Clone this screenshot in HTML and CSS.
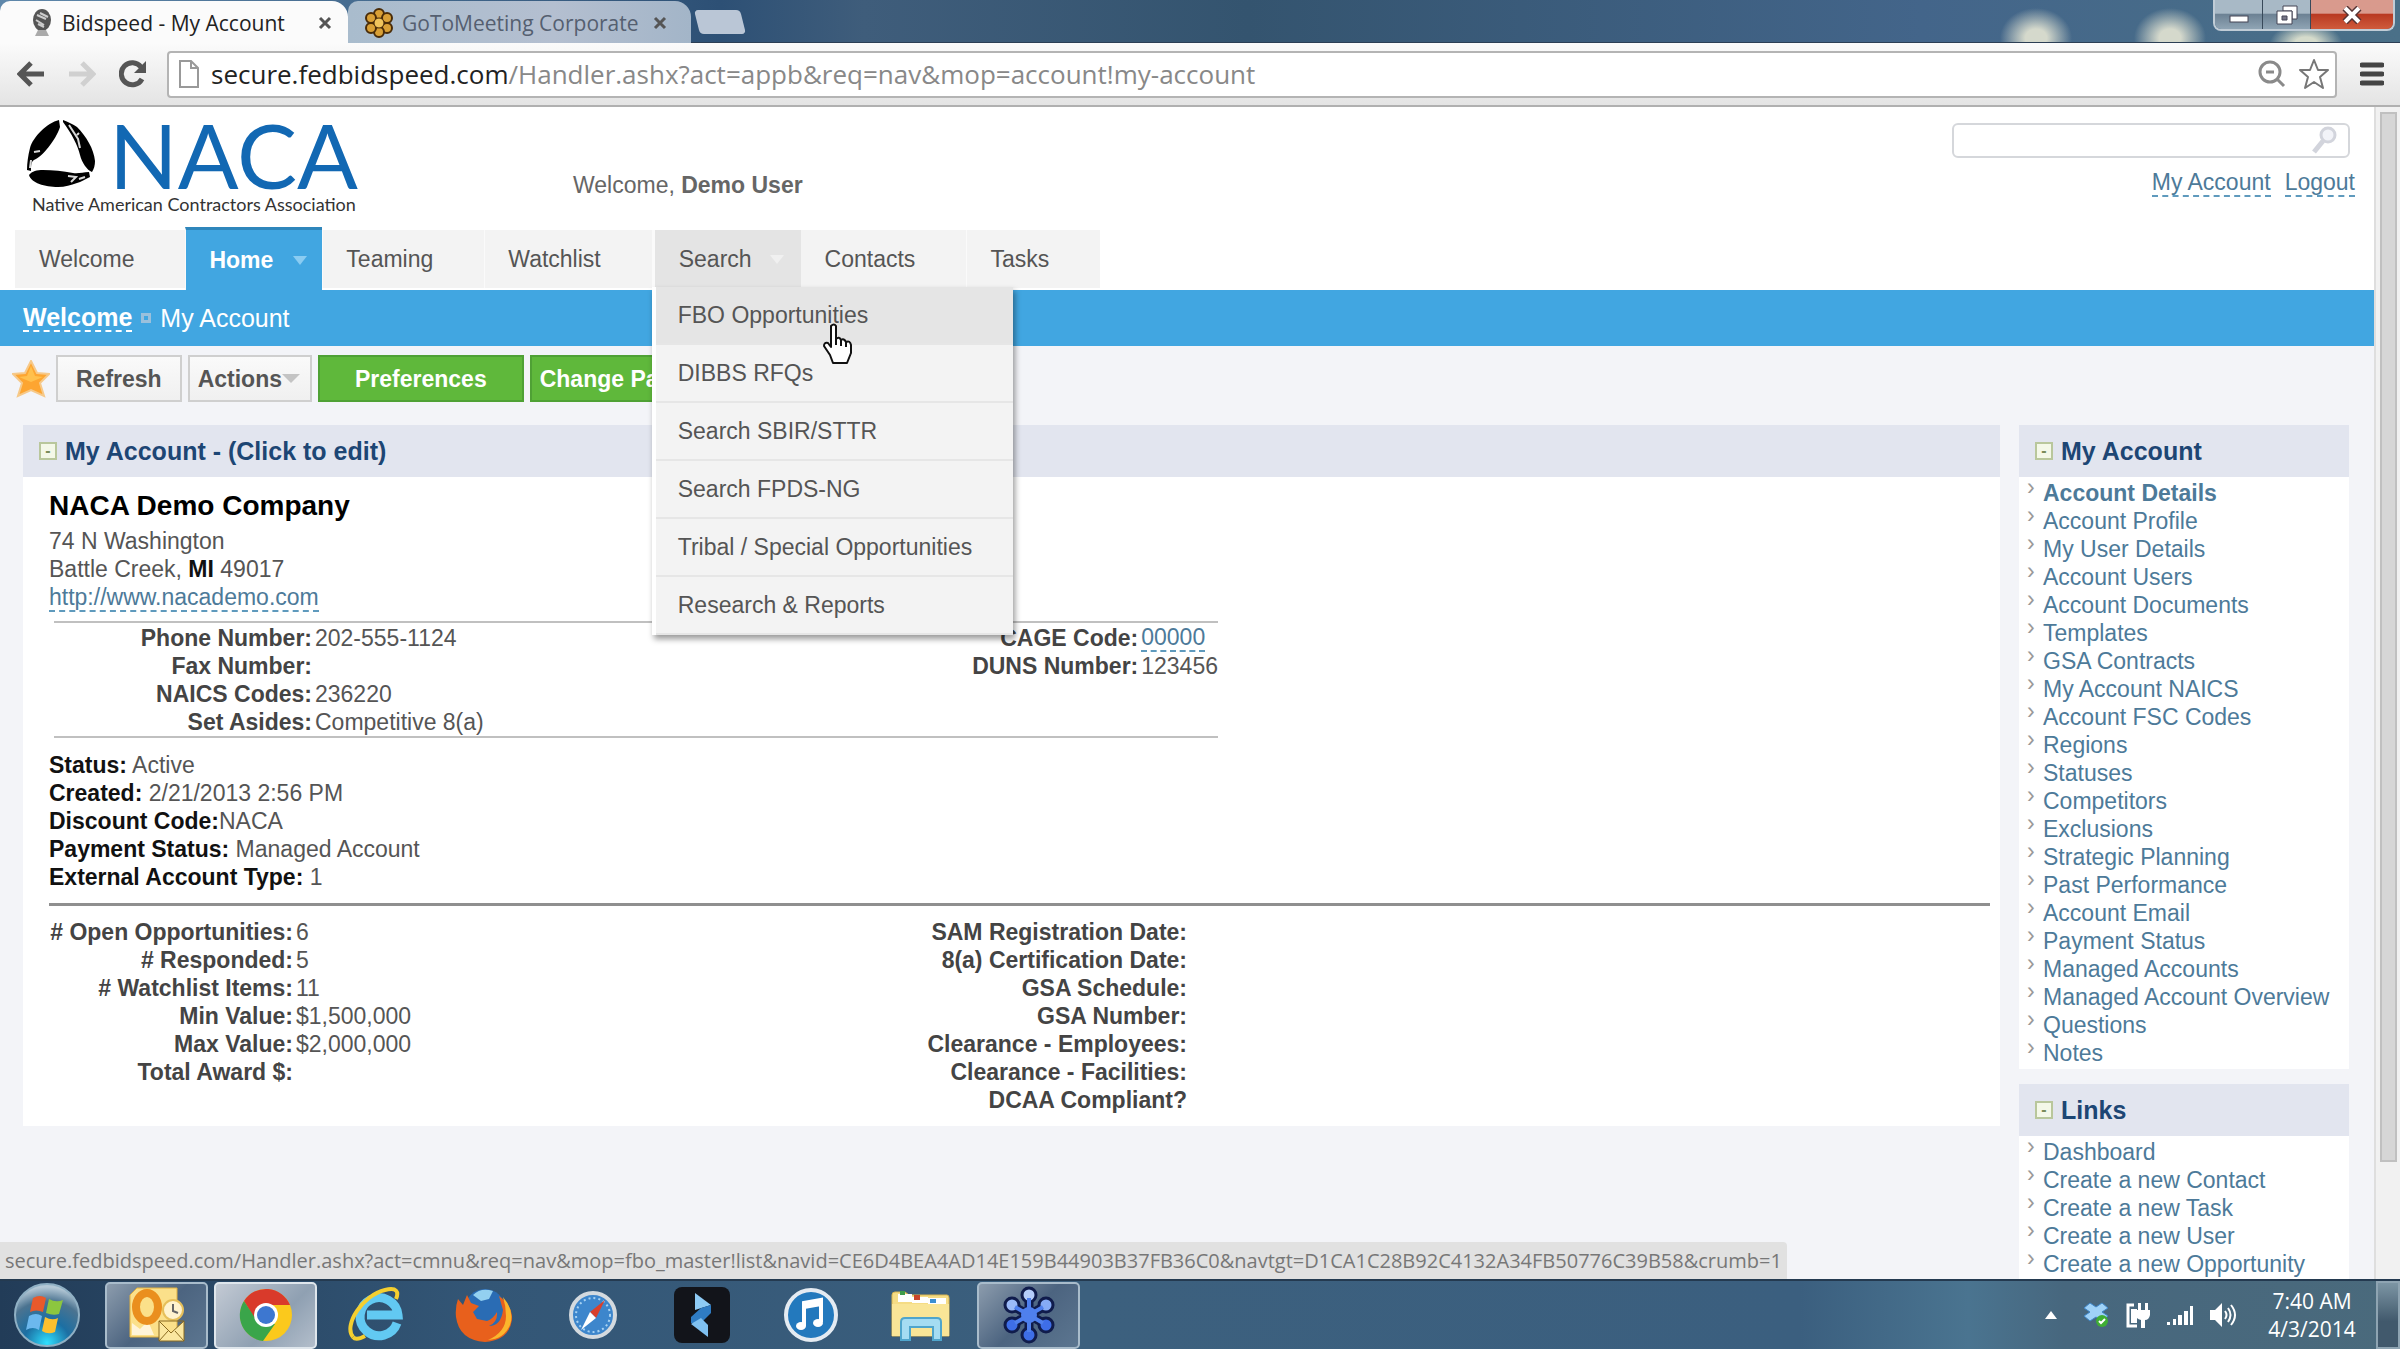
FILE: index.html
```html
<!DOCTYPE html>
<html lang="en">
<head>
    <meta charset="UTF-8">
    <meta name="viewport" content="width=device-width, initial-scale=1.0">
    <title>Bidspeed - My Account</title>
    <link rel="stylesheet" href="styles.css">
</head>
<body>
    <!-- browser tabs -->
    <div class="tabstrip">
        <div class="tab active">
            <svg class="favicon" width="24" height="28" viewBox="0 0 24 28"><ellipse cx="12" cy="11" rx="9" ry="11" fill="#555"/><path d="M7 6l9 4M6 11l8 5M10 4l8 4M8 15l6 3" stroke="#ccc" stroke-width="2"/><path d="M8 21h8l3 6H5z" fill="#aaa"/></svg>
            <span class="tab-title">Bidspeed - My Account</span>
            <button class="tab-close" aria-label="Close tab"><svg width="14" height="14" viewBox="0 0 14 14"><path d="M2 2l10 10M12 2L2 12" stroke="#555" stroke-width="3"/></svg></button>
        </div>
        <div class="tab">
            <svg class="favicon" width="30" height="30" viewBox="0 0 30 30"><g fill="#d9a036" stroke="#4a2c08" stroke-width="2"><circle cx="15" cy="6" r="5"/><circle cx="23" cy="10" r="5"/><circle cx="23" cy="20" r="5"/><circle cx="15" cy="24" r="5"/><circle cx="7" cy="20" r="5"/><circle cx="7" cy="10" r="5"/></g><circle cx="15" cy="15" r="5" fill="#f0c45c" stroke="#4a2c08"/></svg>
            <span class="tab-title">GoToMeeting Corporate</span>
            <button class="tab-close" aria-label="Close tab"><svg width="14" height="14" viewBox="0 0 14 14"><path d="M2 2l10 10M12 2L2 12" stroke="#555" stroke-width="3"/></svg></button>
        </div>
        <button class="new-tab" aria-label="New tab"></button>
        <div class="window-controls">
            <button aria-label="Minimize"><svg width="20" height="18" viewBox="0 0 20 18"><rect x="1" y="10" width="18" height="6" fill="#fff" stroke="#445" stroke-width="1"/></svg></button>
            <button aria-label="Restore"><svg width="22" height="20" viewBox="0 0 22 20"><path d="M7 1h14v13h-5V6H7z" fill="#fff" stroke="#445"/><path d="M1 6h15v13H1z" fill="#fff" stroke="#445"/><path d="M6 11h5v4H6z" fill="#778" stroke="#445"/></svg></button>
            <button class="close" aria-label="Close"><svg width="20" height="18" viewBox="0 0 20 18"><path d="M3 2l14 14M17 2L3 16" stroke="#533" stroke-width="7"/><path d="M3 2l14 14M17 2L3 16" stroke="#fff" stroke-width="4"/></svg></button>
        </div>
    </div>

    <div class="toolbar">
        <button aria-label="Back"><svg width="28" height="26" viewBox="0 0 28 26"><path d="M27 13H5M14 2L3 13l11 11" fill="none" stroke="#555" stroke-width="5"/></svg></button>
        <button aria-label="Forward"><svg width="28" height="26" viewBox="0 0 28 26"><path d="M1 13h22M14 2l11 11-11 11" fill="none" stroke="#d0d0d0" stroke-width="5"/></svg></button>
        <button aria-label="Reload"><svg width="28" height="28" viewBox="0 0 28 28"><path d="M23 19A11 11 0 1 1 22 7" fill="none" stroke="#555" stroke-width="5"/><path d="M27 1v12H15z" fill="#555"/></svg></button>
        <div class="omnibox">
            <svg width="20" height="28" viewBox="0 0 20 28"><path d="M1 1h11l7 7v19H1zM12 1v7h7" fill="#fff" stroke="#999" stroke-width="2"/></svg>
            <span class="url"><b>secure.fedbidspeed.com</b>/Handler.ashx?act=appb&amp;req=nav&amp;mop=account!my-account</span>
            <button aria-label="Zoom"><svg width="28" height="28" viewBox="0 0 28 28"><circle cx="12" cy="12" r="10" fill="none" stroke="#8a8a8a" stroke-width="3"/><path d="M8 12h8M19 19l7 7" stroke="#8a8a8a" stroke-width="3"/></svg></button>
            <button aria-label="Bookmark"><svg width="32" height="32" viewBox="0 0 32 32"><path d="M16 2l4 10h10l-8 7 3 11-9-6-9 6 3-11-8-7h10z" fill="#fff" stroke="#777" stroke-width="2" stroke-linejoin="round"/></svg></button>
        </div>
        <button class="menu-button" aria-label="Menu"><svg width="24" height="24" viewBox="0 0 24 24"><path d="M2 3h20M2 12h20M2 21h20" stroke="#444" stroke-width="5" stroke-linecap="round"/></svg></button>
    </div>

    <div class="viewport">
        <div class="page">
            <header class="header">
                <div class="logo">
                    <!-- three feathers arranged as a triangle -->
                    <svg class="emblem" width="72" height="70" viewBox="0 0 72 70">
                        <path d="M33 1C21 4 7 18 4 29c-2 8-3 15-3 22l4 1c0-5 0-9 3-11 8-3 22-20 26-33z"/>
                        <path d="M37 1c5 2 10 4 14 7 9 9 17 22 18 34 0 4-1 8-3 11-5-2-10-9-12-17-2-9-8-21-17-33z"/>
                        <path d="M3 56c3-4 8-5 14-5 10 0 20 1 30 3 5 1 10-1 16-1l1 5c-5 2-9 5-13 6-6 2-12 4-19 4C19 68 5 64 3 56z"/>
                        <path d="M5 41l-1 8M8 33l6-1M43 6l9 14 2 9M51 16l2-2M42 57l8 1-5 5M53 60l6-2" fill="none" stroke="#d8d8d8" stroke-width="2"/>
                    </svg>
                    <span class="logo-name">NACA</span>
                    <span class="logo-tag">Native American Contractors Association</span>
                </div>
                <p class="greeting">Welcome, <b>Demo User</b></p>
                <div class="user-tools">
                    <label class="search-box">
                        <input type="text" aria-label="Search">
                        <svg width="26" height="30" viewBox="0 0 26 30"><circle cx="16" cy="10" r="7" fill="#f2f3f8" stroke="#d2d4dc" stroke-width="3"/><path d="M11 16L2 27" stroke="#d2d4dc" stroke-width="5"/></svg>
                    </label>
                    <div class="user-links">
                        <a href="#">My Account</a>
                        <a href="#">Logout</a>
                    </div>
                </div>
            </header>

            <nav class="nav">
                <a href="#">Welcome</a>
                <a href="#" class="current">Home <span class="caret"></span></a>
                <a href="#">Teaming</a>
                <a href="#">Watchlist</a>
                <div class="nav-item">
                    <a href="#" class="open">Search <span class="caret"></span></a>
                    <div class="dropdown">
                        <a href="#" class="hovered">FBO Opportunities</a>
                        <a href="#">DIBBS RFQs</a>
                        <a href="#">Search SBIR/STTR</a>
                        <a href="#">Search FPDS-NG</a>
                        <a href="#">Tribal / Special Opportunities</a>
                        <a href="#">Research &amp; Reports</a>
                        <svg class="cursor" width="32" height="42" viewBox="0 0 32 42"><path d="M9 3q3-3 5 0v13q3-3 5 1 3-2 5 2 4-2 5 3v8l-4 10H11L8 32 2 23q0-4 4-3l3 4z" fill="#fff" stroke="#111" stroke-width="2" stroke-linejoin="round"/><path d="M14 15v7M19 17v6M24 19v5" stroke="#111" stroke-width="2"/></svg>
                    </div>
                </div>
                <a href="#">Contacts</a>
                <a href="#">Tasks</a>
            </nav>

            <div class="breadcrumb">
                <a href="#">Welcome</a>
                <span class="crumb-sep"></span>
                <span>My Account</span>
            </div>

            <div class="body">
                <div class="actions">
                    <svg width="38" height="38" viewBox="0 0 38 38"><path d="M19 1l6 12 12 1-9 9 4 13-13-6-13 6 4-13-9-9 12-1z" fill="#fda531" stroke="#f6c98a" stroke-width="2"/><path d="M19 6l4 10 8 1-12 5-12-5 8-1z" fill="#ffc04d"/></svg>
                    <button class="btn">Refresh</button>
                    <button class="btn menu">Actions<span class="caret"></span></button>
                    <button class="btn green wide">Preferences</button>
                    <button class="btn green">Change Password</button>
                </div>

                <div class="columns">
                    <main class="panel">
                        <h2><button class="toggle" aria-label="Collapse">-</button>My Account - (Click to edit)</h2>
                        <div class="account">
                            <h1>NACA Demo Company</h1>
                            <p>74 N Washington</p>
                            <p>Battle Creek, <b>MI</b> 49017</p>
                            <p><a href="#" class="dashed">http://www.nacademo.com</a></p>

                            <table class="contact">
                                <tr><th>Phone Number:</th><td>202-555-1124</td><th>CAGE Code:</th><td><a href="#" class="dashed">00000</a></td></tr>
                                <tr><th>Fax Number:</th><td></td><th>DUNS Number:</th><td>123456</td></tr>
                                <tr><th>NAICS Codes:</th><td>236220</td><th></th><td></td></tr>
                                <tr><th>Set Asides:</th><td>Competitive 8(a)</td><th></th><td></td></tr>
                            </table>

                            <p><b>Status:</b> Active</p>
                            <p><b>Created:</b> 2/21/2013 2:56 PM</p>
                            <p><b>Discount Code:</b>NACA</p>
                            <p><b>Payment Status:</b> Managed Account</p>
                            <p><b>External Account Type:</b> 1</p>
                            <hr>

                            <table class="stats">
                                <tr><th># Open Opportunities:</th><td>6</td><th>SAM Registration Date:</th></tr>
                                <tr><th># Responded:</th><td>5</td><th>8(a) Certification Date:</th></tr>
                                <tr><th># Watchlist Items:</th><td>11</td><th>GSA Schedule:</th></tr>
                                <tr><th>Min Value:</th><td>$1,500,000</td><th>GSA Number:</th></tr>
                                <tr><th>Max Value:</th><td>$2,000,000</td><th>Clearance - Employees:</th></tr>
                                <tr><th>Total Award $:</th><td></td><th>Clearance - Facilities:</th></tr>
                                <tr><th></th><td></td><th>DCAA Compliant?</th></tr>
                            </table>
                        </div>
                    </main>

                    <aside class="sidebar">
                        <section class="panel">
                            <h2><button class="toggle" aria-label="Collapse">-</button>My Account</h2>
                            <ul>
                                <li><a href="#"><b>Account Details</b></a></li>
                                <li><a href="#">Account Profile</a></li>
                                <li><a href="#">My User Details</a></li>
                                <li><a href="#">Account Users</a></li>
                                <li><a href="#">Account Documents</a></li>
                                <li><a href="#">Templates</a></li>
                                <li><a href="#">GSA Contracts</a></li>
                                <li><a href="#">My Account NAICS</a></li>
                                <li><a href="#">Account FSC Codes</a></li>
                                <li><a href="#">Regions</a></li>
                                <li><a href="#">Statuses</a></li>
                                <li><a href="#">Competitors</a></li>
                                <li><a href="#">Exclusions</a></li>
                                <li><a href="#">Strategic Planning</a></li>
                                <li><a href="#">Past Performance</a></li>
                                <li><a href="#">Account Email</a></li>
                                <li><a href="#">Payment Status</a></li>
                                <li><a href="#">Managed Accounts</a></li>
                                <li><a href="#">Managed Account Overview</a></li>
                                <li><a href="#">Questions</a></li>
                                <li><a href="#">Notes</a></li>
                            </ul>
                        </section>
                        <section class="panel">
                            <h2><button class="toggle" aria-label="Collapse">-</button>Links</h2>
                            <ul>
                                <li><a href="#">Dashboard</a></li>
                                <li><a href="#">Create a new Contact</a></li>
                                <li><a href="#">Create a new Task</a></li>
                                <li><a href="#">Create a new User</a></li>
                                <li><a href="#">Create a new Opportunity</a></li>
                            </ul>
                        </section>
                    </aside>
                </div>
            </div>
        </div>
        <div class="scrollbar"><div class="thumb"></div></div>
        <div class="status">secure.fedbidspeed.com/Handler.ashx?act=cmnu&amp;req=nav&amp;mop=fbo_master!list&amp;navid=CE6D4BEA4AD14E159B44903B37FB36C0&amp;navtgt=D1CA1C28B92C4132A34FB50776C39B58&amp;crumb=1</div>
    </div>

    <div class="taskbar">
        <button class="start" aria-label="Start">
            <svg width="68" height="66" viewBox="0 0 68 66">
                <defs><radialGradient id="orb" cx=".5" cy=".95" r=".9"><stop offset="0" stop-color="#2fe0ff"/><stop offset=".4" stop-color="#1c6fa3"/><stop offset=".75" stop-color="#4b7390"/><stop offset="1" stop-color="#b4c8d6"/></radialGradient></defs>
                <ellipse cx="34" cy="33" rx="32" ry="31" fill="url(#orb)" stroke="#8fb0c4" stroke-width="2"/>
                <path d="M20 16q7-4 13 0l-3 14q-7-3-13 0z" fill="#e8592b"/>
                <path d="M36 17q7 4 14 1l-4 14q-6 2-13-1z" fill="#8cc63f"/>
                <path d="M16 34q7-4 13 0l-3 14q-6-4-13 0z" fill="#6cb8ee"/>
                <path d="M32 35q7 4 13 1l-3 14q-7 3-13-1z" fill="#fcc02e"/>
            </svg>
        </button>
        <button class="task running" aria-label="Outlook">
            <svg width="56" height="56" viewBox="0 0 56 56">
                <path d="M8 1h40v49H1V8z" fill="#fbe08a" stroke="#e0b040"/>
                <path d="M3 48V36l8 6 8-8 6 14z" fill="#fff4d8"/>
                <ellipse cx="18" cy="20" rx="11" ry="14" fill="#fbe08a" stroke="#ea8f1e" stroke-width="8"/>
                <circle cx="44" cy="23" r="10" fill="#fff3cf" stroke="#e6bf5a" stroke-width="2"/>
                <path d="M44 17v7l5 2" fill="none" stroke="#666" stroke-width="2"/>
                <path d="M30 34h25v20H30zM30 34l12 12 13-12M30 54l9-10M55 54l-9-10" fill="#fbe7a0" stroke="#8a6a20" stroke-width="1"/>
            </svg>
        </button>
        <button class="task running front" aria-label="Chrome">
            <svg width="54" height="54" viewBox="0 0 54 54">
                <circle cx="27" cy="27" r="26" fill="#fbc91c"/>
                <path d="M5 13A26 26 0 0 1 51 17H27L17 33z" fill="#d93a2b"/>
                <path d="M5 13l13 20 18 3-12 17A26 26 0 0 1 5 13z" fill="#3aa54a"/>
                <circle cx="27" cy="27" r="12" fill="#fff"/><circle cx="27" cy="27" r="9" fill="#3d77d0"/>
            </svg>
        </button>
        <button class="task" aria-label="Internet Explorer">
            <svg width="56" height="56" viewBox="0 0 56 56">
                <path d="M50 36A19 19 0 1 1 51 28H20" fill="none" stroke="#62c9f2" stroke-width="9"/>
                <path d="M6 50C-4 38 16 8 38 3c12-3 14 2 11 9" fill="none" stroke="#f5cf2f" stroke-width="4"/>
                <path d="M6 50q3 4 12-1" fill="none" stroke="#f5cf2f" stroke-width="4"/>
            </svg>
        </button>
        <button class="task" aria-label="Firefox">
            <svg width="58" height="56" viewBox="0 0 58 56">
                <circle cx="30" cy="22" r="20" fill="#2a6cb4"/><path d="M18 8q8-8 20-4l-4 8-8 2z" fill="#93d0f0"/>
                <path d="M3 12l5 6 4-10 4 8 8 3-6 6 4 7 10 2q6-2 10-9 1 10-8 14 12 0 14-16l-4-14q14 10 13 24Q54 53 30 55 4 53 1 30 0 20 3 12z" fill="#e8601c"/>
                <path d="M48 10q12 14 7 28-6 14-22 15 18-8 18-24 0-10-3-19z" fill="#fbb62c"/>
            </svg>
        </button>
        <button class="task" aria-label="Safari">
            <svg width="48" height="48" viewBox="0 0 48 48">
                <circle cx="24" cy="24" r="22" fill="#3d86cc" stroke="#d4dadf" stroke-width="4"/>
                <circle cx="24" cy="24" r="17" fill="none" stroke="#a7d2f2" stroke-width="2" stroke-dasharray="2 3"/>
                <path d="M36 9L27 27l-6-6z" fill="#d9402c"/><path d="M12 39l9-18 6 6z" fill="#fff"/>
            </svg>
        </button>
        <button class="task" aria-label="Player">
            <svg width="56" height="56" viewBox="0 0 56 56">
                <rect x="0" y="0" width="56" height="56" rx="8" fill="#12141a"/>
                <path d="M21 6l16 12-16 5z" fill="#8ecbf5"/><path d="M37 18v8L25 38l-8-2v-6l10-9z" fill="#2f7cc4"/><path d="M17 37l10-6 7 7v12z" fill="#7fc0f0"/>
            </svg>
        </button>
        <button class="task" aria-label="iTunes">
            <svg width="56" height="56" viewBox="0 0 56 56">
                <circle cx="28" cy="28" r="25" fill="#2379bd" stroke="#e4ebf2" stroke-width="4"/>
                <path d="M21 39V16l17-3v22M21 20l17-3" fill="none" stroke="#fff" stroke-width="4"/>
                <ellipse cx="18" cy="39" rx="5" ry="4" fill="#fff"/><ellipse cx="35" cy="36" rx="5" ry="4" fill="#fff"/>
            </svg>
        </button>
        <button class="task" aria-label="Explorer">
            <svg width="60" height="54" viewBox="0 0 60 54">
                <path d="M2 7q0-3 3-3h10l4 3h38q2 0 2 3v38H2z" fill="#f5dc85" stroke="#d9b552"/>
                <path d="M8 6h14v8H8zM22 9h16v6H22zM38 10h18v8H38z" fill="#fff"/>
                <path d="M10 3h5v4h-5z" fill="#3e9c4b"/><path d="M24 7h6v5h-6z" fill="#c9452c"/><path d="M40 11h6v4h-6z" fill="#3c8fd2"/>
                <path d="M2 16h57v32H2z" fill="#f9e597"/>
                <path d="M11 52V34q0-4 4-4h32q4 0 4 4v18h-8V39H20v13z" fill="#a5dcf2" stroke="#4fa5cc" stroke-width="2"/>
            </svg>
        </button>
        <button class="task running" aria-label="GoToMeeting">
            <svg width="52" height="58" viewBox="0 0 52 58">
                <g stroke="#101c4c" stroke-width="3"><path d="M26 29V8M26 29l18-10M26 29l18 10M26 29v21M26 29L8 39M26 29L8 19" stroke-width="9"/>
                <circle cx="26" cy="9" r="7" fill="#b5cdfa"/><circle cx="43" cy="19" r="7" fill="#86abf6"/><circle cx="43" cy="39" r="7" fill="#3e6ee8"/><circle cx="26" cy="49" r="7" fill="#3e6ee8"/><circle cx="9" cy="39" r="7" fill="#3e6ee8"/><circle cx="9" cy="19" r="7" fill="#9bbaf8"/></g>
                <path d="M26 29V12M26 29l14-8M26 29l14 8M26 29v17M26 29l-14 8M26 29l-14-8" stroke="#4f80ee" stroke-width="4"/><circle cx="26" cy="29" r="8" fill="#4f80ee"/>
            </svg>
        </button>

        <div class="tray">
            <svg width="14" height="10" viewBox="0 0 14 10"><path d="M7 1l6 8H1z" fill="#fff"/></svg>
            <svg width="28" height="28" viewBox="0 0 28 28"><path d="M8 2l6 4 6-4 6 5-6 4 6 4-6 5-6-4-6 4-6-5 6-4-6-4z" fill="#9fd2f7" stroke="#3f86c8"/><circle cx="20" cy="20" r="6" fill="#3fae34"/><path d="M17 20l2 2 4-4" fill="none" stroke="#fff" stroke-width="2"/></svg>
            <svg width="26" height="28" viewBox="0 0 26 28"><path d="M9 4H3v21h9" fill="none" stroke="#fff" stroke-width="3"/><path d="M6 8h6v14H6zM11 9h14v5q-1 5-5 5v8h-4v-8q-5-1-5-5zM13 2h3v7h-3zM20 2h3v7h-3z" fill="#fff"/></svg>
            <svg width="28" height="22" viewBox="0 0 28 22"><path d="M1 18h3v3H1zM7 15h3v6H7zM12 11h4v10h-4zM18 7h4v14h-4zM24 2h3v19h-3z" fill="#fff"/></svg>
            <svg width="28" height="26" viewBox="0 0 28 26"><path d="M1 8h5l7-7v24l-7-7H1z" fill="#fff"/><path d="M16 9q3 4 0 8M19 6q5 7 0 14M22 3q8 10 0 20" fill="none" stroke="#fff" stroke-width="2"/></svg>
            <div class="clock">7:40 AM<br>4/3/2014</div>
            <button class="show-desktop" aria-label="Show desktop"></button>
        </div>
    </div>
</body>
</html>
```
FILE: styles.css
```css
* {
    box-sizing: border-box;
}
body {
    margin: 0;
    height: 100vh;
    display: flex;
    flex-direction: column;
    overflow: hidden;
    font-family: "Liberation Sans", Arial, sans-serif;
    font-size: 23px;
    line-height: 28px;
    color: #555;
    background: #fff;
}
button {
    font: inherit;
    padding: 0;
    border: 0;
    background: none;
    cursor: pointer;
}
svg {
    display: block;
    flex: none;
}
p, h1, h2, ul {
    margin: 0;
}
a {
    color: #4d7a99;
    text-decoration: none;
}

/* browser window */
.tabstrip {
    display: flex;
    align-items: flex-start;
    height: 43px;
    border-bottom: 1px solid #2c3f55;
    background:
        radial-gradient(ellipse 36px 30px at 2036px 38px, #d5d9cc 30%, transparent),
        radial-gradient(ellipse 36px 30px at 2170px 38px, #d5d9cc 30%, transparent),
        radial-gradient(ellipse 36px 20px at 2306px 43px, #d5dbcb 30%, transparent),
        linear-gradient(90deg, #5f88ab, #2d5075 30%, #3f5d7b 36%, #34546f 52%, #43658a 80%, #4a7088 100%);
}
.tab {
    display: flex;
    align-items: center;
    width: 343px;
    height: 42px;
    margin-top: 1px;
    padding: 2px 24px 0 16px;
    gap: 8px;
    border-radius: 10px 16px 0 0;
    background: linear-gradient(90deg, #a9bccd, #b4bfd0 60%, #a3b5c8);
    font-family: "Open Sans", sans-serif;
    font-size: 21px;
    color: #555f70;
}
.tab.active {
    width: 348px;
    padding: 2px 16px 0 30px;
    background: #fbfbfb;
    color: #222;
}
.tab-title {
    flex: 1;
    white-space: nowrap;
    overflow: hidden;
}
.new-tab {
    width: 46px;
    height: 24px;
    margin: 10px 0 0 6px;
    border-radius: 4px;
    background: #bac6d6;
    transform: skewX(14deg);
}
.window-controls {
    display: flex;
    margin: 0 5px 0 auto;
    height: 31px;
    border: 2px solid #c0ccd6;
    border-top: 0;
    border-radius: 0 0 8px 8px;
    overflow: hidden;
}
.window-controls button {
    display: flex;
    align-items: center;
    justify-content: center;
    width: 48px;
    border-right: 1px solid #38495a;
    background: linear-gradient(#a8b9c6 45%, #6d8294 50%, #8fa4b4);
}
.window-controls .close {
    width: 82px;
    border: 0;
    background: linear-gradient(#d99a8d 45%, #b93a22 50%, #cf5b3c);
}
.toolbar {
    display: flex;
    align-items: center;
    height: 64px;
    padding: 0 16px 0 17px;
    gap: 23px;
    border-bottom: 2px solid #b0b0b0;
    background: linear-gradient(#fbfbfb, #e4e4e4);
}
.omnibox {
    flex: 1;
    display: flex;
    align-items: center;
    height: 47px;
    margin-left: -3px;
    padding: 0 5px 0 10px;
    gap: 12px;
    border: 2px solid #b4b4b4;
    border-radius: 4px;
    background: #fff;
}
.url {
    flex: 1;
    font-family: "Open Sans", sans-serif;
    font-size: 26px;
    white-space: nowrap;
    color: #888;
}
.url b {
    font-weight: normal;
    color: #222;
}

/* web page */
.viewport {
    position: relative;
    flex: 1;
    min-height: 0;
    display: flex;
}
.page {
    flex: 1;
    display: flex;
    flex-direction: column;
    overflow: hidden;
}
.header, .nav, .breadcrumb {
    flex: none;
}
.header {
    display: flex;
    height: 120px;
    padding: 0 24px 0 26px;
}
.logo {
    display: grid;
    grid-template-columns: 83px auto;
    grid-template-rows: 84px 24px;
    width: 547px;
    padding-top: 5px;
}
.emblem {
    margin-top: 7px;
}
.logo-name {
    font-family: Lato, sans-serif;
    font-size: 90px;
    line-height: 84px;
    color: #1268b3;
}
.logo-tag {
    grid-column: 1 / 3;
    padding-left: 6px;
    font-family: Lato, sans-serif;
    font-size: 18px;
    line-height: 16px;
    color: #333;
}
.greeting {
    padding-top: 64px;
    color: #666;
}
.user-tools {
    display: flex;
    flex-direction: column;
    width: 398px;
    margin-left: auto;
    padding-top: 16px;
    gap: 11px;
}
.search-box {
    display: flex;
    height: 35px;
    padding-right: 10px;
    border: 2px solid #d5d7db;
    border-radius: 6px;
}
.search-box input {
    flex: 1;
    min-width: 0;
    border: 0;
    outline: 0;
    background: none;
    font: inherit;
}
.user-links {
    display: flex;
    justify-content: flex-end;
    margin-right: -5px;
    gap: 14px;
}
.user-links a, .dashed {
    display: inline-block;
    line-height: 26px;
    border-bottom: 2px dashed #5f9abd;
}
.nav {
    display: flex;
    height: 63px;
    padding: 3px 0 0 15px;
}
.nav > a, .nav-item > a {
    display: flex;
    align-items: center;
    height: 58px;
    padding: 0 51px 0 24px;
    background: #f3f3f3;
    color: #555;
}
.nav > a + a {
    padding-left: 23px;
    border-left: 1px solid #fafafa;
}
.nav > .current {
    height: 63px;
    margin-top: -3px;
    padding-right: 15px;
    gap: 20px;
    border-top: 3px solid #2f86bb;
    background: #41a6e1;
    color: #fff;
    font-weight: bold;
}
.caret {
    border: 7px solid transparent;
    border-top: 9px solid #8accf2;
    border-bottom: 0;
}
.nav-item {
    position: relative;
    border-left: 3px solid #fafafa;
}
.nav-item > .open {
    height: 60px;
    padding: 0 17px 2px 24px;
    gap: 18px;
    background: #e4e4e4;
}
.open .caret {
    border-top-color: #f0f0f0;
}
.dropdown {
    position: absolute;
    z-index: 2;
    top: 57px;
    left: -3px;
    width: 361px;
    border-left: 4px solid #fff;
    background: #f3f3f3;
    box-shadow: 2px 4px 6px rgba(0, 0, 0, 0.4);
}
.dropdown a {
    display: flex;
    align-items: center;
    height: 58px;
    padding: 0 22px;
    border-bottom: 2px solid #e6e6e6;
    color: #555;
    white-space: nowrap;
}
.dropdown .hovered {
    background: #e5e5e5;
}
.cursor {
    position: absolute;
    left: 166px;
    top: 36px;
}
.breadcrumb {
    display: flex;
    align-items: center;
    height: 56px;
    padding-left: 23px;
    gap: 9px;
    background: #41a6e1;
    color: #fff;
    font-size: 25px;
}
.breadcrumb a {
    line-height: 26px;
    border-bottom: 2px dashed #fff;
    color: #fff;
    font-weight: bold;
}
.crumb-sep {
    width: 10px;
    height: 10px;
    border: 3px solid #9ac0dc;
}
.body {
    flex: 1;
    padding: 9px 25px 0 23px;
    background: #f3f4f8;
}
.actions {
    display: flex;
    align-items: center;
    height: 47px;
    margin: 0 0 23px -11px;
    gap: 6px;
}
.btn {
    display: flex;
    align-items: center;
    height: 47px;
    padding: 0 18px;
    border: 2px solid #cfcfcf;
    background: linear-gradient(#fafafa, #f0f0f0);
    color: #555;
    font-weight: bold;
    white-space: nowrap;
}
.btn.menu {
    padding: 0 10px 0 8px;
}
.btn .caret {
    border-width: 9px 9px 0;
    border-top-color: #c4c4c4;
}
.btn.green {
    padding: 0 8px;
    border-color: #4fa135;
    background: #5fb83b;
    color: #fff;
}
.btn.wide {
    padding: 0 35px;
}
.columns {
    display: flex;
    align-items: flex-start;
    gap: 19px;
}
.panel {
    background: #fff;
}
.panel h2 {
    display: flex;
    align-items: center;
    height: 52px;
    padding-left: 16px;
    gap: 8px;
    background: #e2e5ef;
    color: #1d4674;
    font-size: 25px;
}
.toggle {
    width: 18px;
    height: 18px;
    border: 2px solid #b9c79c;
    background: #f4f8e8;
    color: #7a8c5a;
    font-size: 16px;
    line-height: 10px;
}
main.panel {
    flex: 1;
}
.account {
    padding: 12px 10px 12px 26px;
}
.account b {
    color: #111;
}
.account h1 {
    margin-bottom: 4px;
    font-size: 28px;
    line-height: 34px;
    color: #000;
}
table {
    border-collapse: collapse;
}
th, td {
    height: 28px;
    padding: 0;
    text-align: left;
}
th {
    padding-right: 3px;
    text-align: right;
    color: #444;
}
.contact {
    width: 1164px;
    margin: 9px 0 13px 5px;
    border: solid #c0c0c0;
    border-width: 2px 0;
}
.contact th:first-child {
    width: 261px;
}
.contact th:nth-child(3) {
    width: 300px;
}
.contact td:last-child {
    width: 75px;
}
hr {
    margin: 12px 0;
    border: 0;
    border-top: 3px solid #8f8f8f;
}
.stats {
    width: 1141px;
}
.stats th:first-child {
    width: 247px;
}
.sidebar {
    width: 330px;
    display: flex;
    flex-direction: column;
    gap: 15px;
}
.sidebar ul {
    padding: 2px 0 2px 24px;
    list-style: none;
}
.sidebar li {
    position: relative;
    white-space: nowrap;
}
.sidebar li::before {
    content: "›";
    position: absolute;
    left: -16px;
    top: -6px;
    color: #999;
}
.scrollbar {
    width: 26px;
    padding: 5px 3px 0 4px;
    border-left: 2px solid #dedede;
    background: #f1f1f1;
}
.thumb {
    height: 90%;
    border: 2px solid #c0c0c0;
    background: #d6d6d6;
}
.status {
    position: absolute;
    left: 0;
    bottom: 0;
    padding: 5px 5px 4px;
    border-radius: 0 4px 0 0;
    background: #e1e1e1;
    font-family: "Open Sans", sans-serif;
    font-size: 20px;
    white-space: nowrap;
    color: #777;
}

/* desktop taskbar */
.taskbar {
    display: flex;
    align-items: center;
    height: 70px;
    padding-left: 13px;
    border-top: 2px solid #243a50;
    background: linear-gradient(90deg, #223c58, #335676 20%, #3c607e 45%, #3b5f7f 75%, #4a7490 82%, #47677e 86%, #4a6a7c);
}
.start {
    margin-right: 24px;
}
.task {
    display: flex;
    align-items: center;
    justify-content: center;
    width: 103px;
    height: 67px;
    margin-right: 6px;
}
.task.running {
    border: 2px solid #a9bccb;
    border-radius: 5px;
    background: linear-gradient(135deg, #8c9cad, #4c6480 50%, #5c7690);
}
.task.front {
    border-color: #dfe6ec;
    background: linear-gradient(135deg, #c3cad4, #8fa0b2 60%, #b3becb);
}
.tray {
    display: flex;
    align-items: center;
    height: 68px;
    margin-left: auto;
    gap: 15px;
}
.tray svg:first-child {
    margin-right: 9px;
}
.clock {
    width: 90px;
    margin-left: 15px;
    font-family: "Open Sans", sans-serif;
    font-size: 21px;
    text-align: center;
    color: #fff;
}
.show-desktop {
    width: 24px;
    height: 68px;
    margin-left: 4px;
    border: 2px solid #8ea4b2;
    background: linear-gradient(#7c95a4, #41596c 60%);
}
```
